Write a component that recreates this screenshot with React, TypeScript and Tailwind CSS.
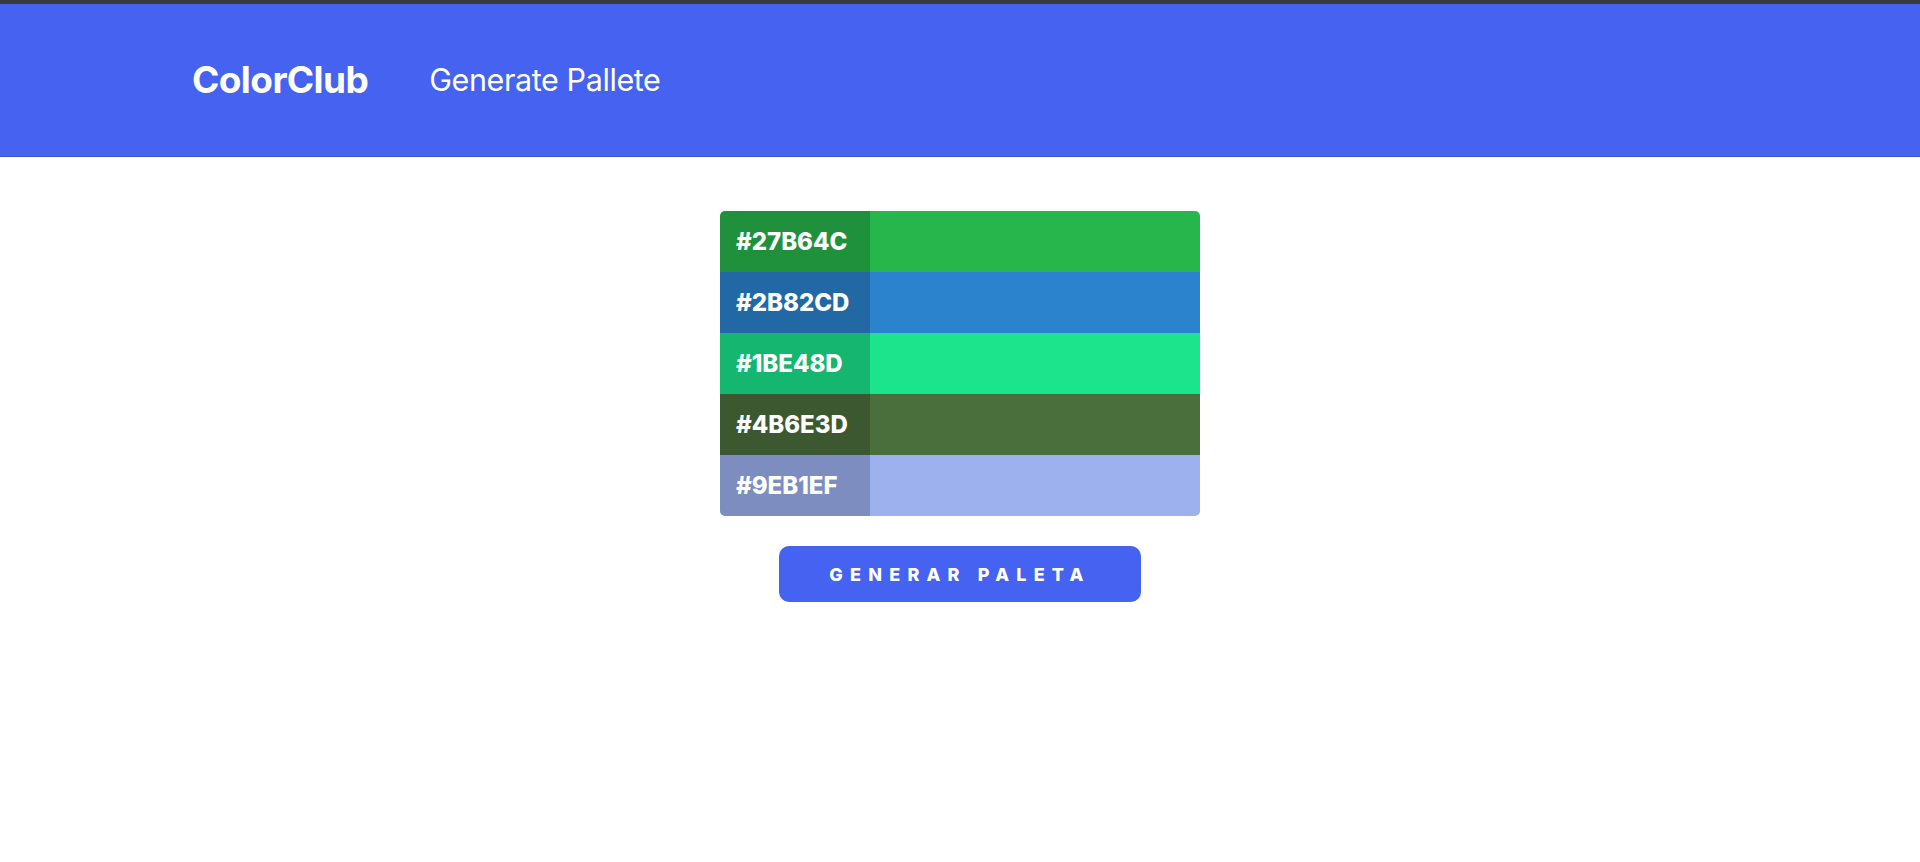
const colors = ["#27B64C", "#2B82CD", "#1BE48D", "#4B6E3D", "#9EB1EF"];

export default function App() {
  return (
    <div className="min-h-screen bg-white" style={{ fontFamily: "Inter, 'Noto Sans', sans-serif" }}>
      <div className="h-[4px] bg-[#3b3b3b]" />
      <header className="flex h-[153px] items-center border-b border-[#3b52cc] bg-[#4563F0] pl-[192px]">
        <span className="text-[37px] font-bold tracking-[-0.6px] text-white">ColorClub</span>
        <span className="ml-[61px] text-[30.5px] font-normal tracking-[-0.4px] text-white">Generate Pallete</span>
      </header>

      <main className="flex flex-col items-center pt-[54px]">
        <div className="w-[480px] overflow-hidden rounded-[5px]">
          {colors.map((c) => (
            <div key={c} className="flex h-[61px]" style={{ backgroundColor: c }}>
              <div className="flex w-[150px] items-center bg-black/20 pl-4">
                <span className="text-[24px] font-extrabold tracking-[0px] text-white">{c}</span>
              </div>
            </div>
          ))}
        </div>

        <button className="mt-[30px] h-[56px] w-[362px] rounded-[10px] bg-[#4563F0] text-[18px] font-extrabold tracking-[0.4em] text-white">
          GENERAR PALETA
        </button>
      </main>
    </div>
  );
}
